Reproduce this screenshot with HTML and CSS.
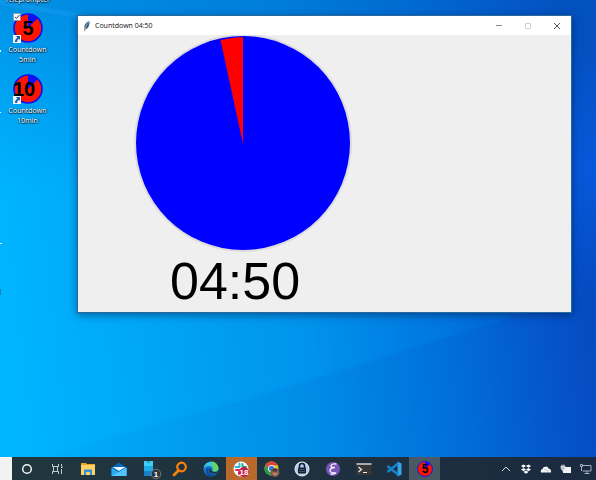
FILE: index.html
```html
<!DOCTYPE html>
<html lang="en">
<head>
<meta charset="utf-8">
<title>Countdown 04:50</title>
<link rel="stylesheet" href="styles.css">
</head>
<body>
<svg class="wallpaper" viewBox="0 0 596 480" preserveAspectRatio="none" aria-hidden="true">
  <defs>
    <linearGradient id="sky" gradientUnits="userSpaceOnUse" x1="0" y1="330" x2="596" y2="260">
      <stop offset="0" stop-color="#00b6ff"/><stop offset=".2" stop-color="#00a8f8"/>
      <stop offset=".5" stop-color="#0092ec"/><stop offset=".75" stop-color="#0070dc"/>
      <stop offset=".92" stop-color="#0652cc"/><stop offset="1" stop-color="#0548be"/>
    </linearGradient>
    <linearGradient id="shade" x1="0" y1="0" x2="0" y2="1">
      <stop offset="0" stop-color="#0060c0" stop-opacity=".4"/><stop offset=".4" stop-color="#0070d0" stop-opacity="0"/>
    </linearGradient>
    <radialGradient id="glow" gradientUnits="userSpaceOnUse" cx="600" cy="170" r="130">
      <stop offset="0" stop-color="#0660e8" stop-opacity=".7"/><stop offset="1" stop-color="#0660e8" stop-opacity="0"/>
    </radialGradient>
    <linearGradient id="beam" x1="0" y1="0" x2="1" y2="0">
      <stop offset="0" stop-color="#0090e0" stop-opacity=".08"/><stop offset=".55" stop-color="#0070d0" stop-opacity=".18"/><stop offset="1" stop-color="#0450b8" stop-opacity=".2"/>
    </linearGradient>
  </defs>
  <rect width="596" height="480" fill="url(#sky)"/>
  <rect width="596" height="480" fill="url(#shade)"/>
  <path d="M0 0 110 18 78 18 0 5Z" fill="#30b0ff" opacity=".2"/>
  <rect width="596" height="480" fill="url(#glow)"/>
  <path d="M0 336 180 312 530 312 0 470Z" fill="#08b8ff" opacity=".06"/>
  <path d="M0 470 300 384 530 312 596 285V480H0Z" fill="url(#beam)"/>
  <path d="M0 50h1v2H0zM0 112h1v1H0zM0 243h2v1H0z" fill="#e8f6ff"/>
  <path d="M0 289h1v6H0z" fill="#2080b0"/>
</svg>

<svg class="defs" aria-hidden="true">
  <symbol id="dial" viewBox="0 0 30 30">
    <circle cx="15" cy="15" r="14" fill="#ff1400" stroke="#1010f0" stroke-width="1.6"/>
    <path d="M15 15V1A14 14 0 0 1 25 5Z" fill="#1010f0"/>
  </symbol>
  <symbol id="shortcut" viewBox="0 0 8 8">
    <path d="M0 0h8v8H0z" fill="#f2f6fa"/>
    <path d="M3 1h4v4L5.800 3.800Q4 5 4 7H2Q1.800 4.500 4.300 2.400Z" fill="#1c5ca8"/>
  </symbol>
</svg>

<main class="desktop">
  <ul class="shortcuts">
    <li class="shortcut cut"><span>Teleprompter</span></li>
    <li class="shortcut">
      <svg class="pic" viewBox="0 0 30 30">
        <use href="#dial" width="30" height="30"/>
        <text x="15" y="22" class="numeral" text-anchor="middle">5</text>
        <path d="M.5.500h7v7h-7z" fill="#f4f8fa" stroke="#889" stroke-width=".5"/>
        <path d="m2 4 1.500 1.500L6.500 2" fill="none" stroke="#444"/>
        <use href="#shortcut" y="22" width="8" height="8"/>
      </svg>
      <span>Countdown<br>5min</span>
    </li>
    <li class="shortcut">
      <svg class="pic" viewBox="0 0 30 30">
        <use href="#dial" width="30" height="30"/>
        <text x="11" y="22" class="numeral" text-anchor="middle">10</text>
        <use href="#shortcut" y="22" width="8" height="8"/>
      </svg>
      <span>Countdown<br>10min</span>
    </li>
  </ul>

  <section class="window">
    <header class="titlebar">
      <svg class="feather" viewBox="0 0 8 12"><path d="M6.500 1Q3 2 1.800 5 1 7 1.600 9L1 12l1.400-2.500Q5 9 5.800 6 7 3 6.500 1Z" fill="#385878"/><path d="M5.800 2Q3 5 2.300 9" fill="none" stroke="#a8c4dc" stroke-width=".8"/></svg>
      <h1>Countdown 04:50</h1>
      <div class="controls">
        <button aria-label="Minimize"><svg viewBox="0 0 8 8"><path d="M1 3.500h6" stroke="#888"/></svg></button>
        <button aria-label="Maximize" disabled><svg viewBox="0 0 8 8"><path d="M1.500 1.500h5v5h-5z" fill="none" stroke="#d4d4d4"/></svg></button>
        <button aria-label="Close"><svg viewBox="0 0 8 8"><path d="m1 1 6 6M7 1 1 7" stroke="#444" stroke-width=".9"/></svg></button>
      </div>
    </header>
    <div class="timer">
      <svg class="pie" viewBox="0 0 218 218">
        <circle cx="109" cy="108" r="108" fill="none" stroke="#dcdce0" stroke-width="2"/>
        <circle cx="109" cy="108" r="107" fill="#00f"/>
        <path d="M109 109V2A107 107 0 0 0 86.500 5Z" fill="red"/>
      </svg>
      <output class="time">04:50</output>
    </div>
  </section>
</main>

<nav class="taskbar">
  <div class="start"></div>
  <div class="apps">
    <button aria-label="Search"><svg viewBox="0 0 18 18"><circle cx="9" cy="9" r="4.300" fill="none" stroke="#f4f4f4" stroke-width="1.500"/></svg></button>
    <button aria-label="Task view"><svg viewBox="0 0 18 18"><path d="M3.500 4v2.500h6V4M3.500 14v-2.500h6V14M4.500 6.500v5M8.500 6.500v5M12.500 4v2M12.500 9v5" fill="none" stroke="#c4cbd0"/><path d="M12 6.500h1.500v1.500H12z" fill="#eee"/></svg></button>
    <button aria-label="Files"><svg viewBox="0 0 18 18"><path d="M2 3h5l1 1h8v2H2z" fill="#e9a51b"/><path d="M2 5h14v10H2z" fill="#ffd267"/><path d="M5 15V9.500h8V15h-2v-3H7v3z" fill="#368ed6"/></svg></button>
    <button aria-label="Mail"><svg viewBox="0 0 18 18"><path d="m1.500 7.500 7.500-5 7.500 5V15h-15z" fill="#0868b8"/><path d="M2.500 7h13L9 11z" fill="#e8f6ff"/><path d="m1.500 7.500 7.500 5 7.500-5V16h-15z" fill="#28aaf0"/><path d="M1.500 16 16.500 7.500V16z" fill="#54c4ff"/></svg></button>
    <button aria-label="Your Phone"><svg viewBox="0 0 18 18"><path d="M3 1h9v15H3z" fill="#1680c8"/><path d="M3 1h9v5H3z" fill="#42ccf5"/><path d="M3 6h9v5H3z" fill="#20aae8"/><path d="M6 2h3" stroke="#087cae"/><circle cx="15" cy="14" r="4.800" fill="#2e3438" stroke="#8a9298" stroke-width=".7"/><text x="15" y="17" class="badge" text-anchor="middle">1</text></svg></button>
    <button aria-label="Find"><svg viewBox="0 0 18 18"><circle cx="10.500" cy="7" r="4.300" fill="none" stroke="#ff8008" stroke-width="2.200"/><path d="m7.500 10.500-4.500 4.500" stroke="#ff8008" stroke-width="2.800" stroke-linecap="round"/></svg></button>
    <button aria-label="Edge"><svg viewBox="0 0 18 18"><circle cx="9" cy="9" r="7.500" fill="#1678d0"/><path d="M1.700 8C3 0 14.500-.5 16.300 7.500c.8 4-4 5-6 3.500 2-3-1-5.500-4-5Q3.500 6 1.700 8Z" fill="#38c6dc"/><path d="M10 1.500q5.800.8 6.500 7-.5 3-4 3-2 0-2.200-.8 1.800-2.700-.3-4.700Z" fill="#5fd76b"/><path d="M7 8q-2 4 2 6 3 1.500 6-.5Q12 17.500 7 16.200 3 14 4 10 5 7 7 8Z" fill="#0b4d9a"/><path d="M9 8q-1 2 1 3 3 2 6 0l-1 2q-5 2-7.500-1Q6 9.500 9 8Z" fill="#20343f"/></svg></button>
    <button class="alert" aria-label="Slack"><svg viewBox="0 0 18 18"><circle cx="9" cy="9" r="7.500" fill="#fff"/><g stroke-width="2" stroke-linecap="round"><path d="M7.500 3.500V7M3.500 7H6" stroke="#35b6d8"/><path d="M10.500 4v3M12 7h2" stroke="#25a779"/><path d="M4 10h3M7 12v2" stroke="#dc2858"/></g><circle cx="12" cy="12" r="5" fill="#c81848"/><text x="12" y="15" class="badge" text-anchor="middle">18</text></svg></button>
    <button aria-label="Chrome"><svg viewBox="0 0 18 18"><circle cx="8.500" cy="8.500" r="7" fill="#f0bd25"/><path d="M2.400 5A7 7 0 0 1 14.600 5L8.500 6 6 10Z" fill="#dc4438"/><path d="m2.400 5 4 6 2 4.500A7 7 0 0 1 2.400 5Z" fill="#259b50"/><circle cx="8.500" cy="8.500" r="3.500" fill="#fff"/><circle cx="8.500" cy="8.500" r="2.700" fill="#347ce0"/><circle cx="12" cy="12.500" r="4.500" fill="#705850"/><ellipse cx="12" cy="12" rx="2.700" ry="3.600" fill="#c87c68"/><path d="M9.300 10q2.500-3 5 0v1.500h-5z" fill="#443a38"/><path d="M10 12h4" stroke="#303030" stroke-width=".7"/></svg></button>
    <button aria-label="Password manager"><svg viewBox="0 0 18 18"><circle cx="9" cy="9" r="7" fill="#b5cbf4" stroke="#f0f2f6"/><path d="M6.500 8V6q0-2.500 2.500-2.500T11.500 6v2" fill="none" stroke="#15202d" stroke-width="1.500"/><rect x="5" y="7.500" width="8" height="6" rx=".8" fill="#15202d"/><path d="M6 9.500h6M6 11.500h6" stroke="#66778e" stroke-width=".6"/></svg></button>
    <button aria-label="Emacs"><svg viewBox="0 0 18 18"><circle cx="9" cy="9" r="7" fill="#7857b5"/><path d="M12 4Q7 3.500 7 6q0 1.500 4 1.500-5 .3-5 3 0 2.500 6 2.500-3 1.500-5 1" fill="none" stroke="#f4effc" stroke-width="1.300" stroke-linecap="round"/></svg></button>
    <button aria-label="Terminal"><svg viewBox="0 0 18 18"><path d="M1.500 3h15v12h-15z" fill="#373737"/><path d="M1.500 3h15v2h-15z" fill="#aaa"/><path d="m3.500 7 3 2.500-3 2.500M8 12.500h4" fill="none" stroke="#eee" stroke-width="1.200"/></svg></button>
    <button aria-label="Code"><svg viewBox="0 0 18 18"><path d="m12.500 1.500 4 2v11l-4 2z" fill="#32a8ed"/><path d="m2.500 6 10.500 8.500M2.500 12 13 3.500" stroke="#1684cd" stroke-width="2.500"/></svg></button>
    <button class="active" aria-label="Countdown"><svg viewBox="0 0 18 18"><use href="#dial" x="1" y="1" width="16" height="16"/><text x="9" y="13" class="mini" text-anchor="middle">5</text></svg></button>
  </div>
  <div class="tray">
    <button aria-label="Hidden icons"><svg viewBox="0 0 12 12"><path d="m2 8 4-4 4 4" fill="none" stroke="#d4dae0"/></svg></button>
    <button aria-label="Dropbox"><svg viewBox="0 0 12 12"><path d="m3.500 1.500 2.500 1.500-2.500 1.700L1 3zM8.500 1.500 11 3 8.500 4.700 6 3zM3.500 5 6 6.600 3.500 8.200 1 6.600zM8.500 5 11 6.600 8.500 8.200 6 6.600zM6 7.500l2.500 1.600L6 10.800 3.500 9.100z" fill="#fff"/></svg></button>
    <button aria-label="Cloud storage"><svg viewBox="0 0 12 12"><path d="M1 9.500Q0 7 2.500 6 3 3.500 5.500 3.700 7.500 3 8.500 5.500 11.500 6 11 9.500Z" fill="#f1f3f5"/><path d="m4 6 4.500 2.500" stroke="#aab2ba" stroke-width=".7"/></svg></button>
    <button aria-label="Battery"><svg viewBox="0 0 12 12"><path d="M3 4h8v6H3z" fill="#f2f2f2"/><path d="M1 3h4v2L4 7H2L1 5zM2 1.500V4M4 1.500V4M3 7v2" fill="#bbc2c8" stroke="#e4e8ec" stroke-width=".7"/></svg></button>
    <button aria-label="Network"><svg viewBox="0 0 12 12"><path d="M3 2.500h8v5.500H2.500M7 8v2.500M4.500 10.500h5M1.500 4v4M.5 1.500h2v2h-2z" fill="none" stroke="#b2bdc8" stroke-width=".9"/></svg></button>
  </div>
</nav>
</body>
</html>
```

FILE: styles.css
```css
* { box-sizing: border-box; }

body {
  margin: 0;
  min-height: 100vh;
  display: flex;
  flex-direction: column;
  overflow: hidden;
  font-family: "Open Sans", "Noto Sans", sans-serif;
  font-size: 7px;
  background: #0090ea;
}

svg { display: block; flex: none; }

button {
  display: flex;
  align-items: center;
  justify-content: center;
  padding: 0;
  border: 0;
  background: none;
}

.wallpaper {
  position: absolute;
  inset: 0;
  z-index: -1;
  width: 100%;
  height: 100%;
}

.defs { position: absolute; width: 0; height: 0; }

.desktop {
  flex: 1;
  display: flex;
  align-items: flex-start;
}

.shortcuts {
  flex: none;
  width: 55px;
  margin: 0;
  padding: 0;
  list-style: none;
}

.shortcut {
  display: flex;
  flex-direction: column;
  align-items: center;
  gap: 2px;
  height: 61px;
  color: #fff;
  line-height: 10px;
  text-align: center;
  text-shadow: 0 1px 1px #000, 1px 0 1px #024;
}

.cut {
  height: 13px;
  justify-content: flex-end;
  padding-bottom: 8px;
}

.pic { width: 30px; height: 30px; overflow: visible; }

.numeral {
  font: bold 20px "Liberation Sans", sans-serif;
  text-shadow: none;
}

.window {
  flex: 1;
  margin: 15px 24px 0 22px;
  border: 1px solid #28689c;
  background: #efefef;
  box-shadow: 0 2px 8px rgba(0, 20, 60, .5);
}

.titlebar {
  display: flex;
  align-items: center;
  gap: 4px;
  height: 19px;
  padding-left: 5px;
  background: #fff;
}

.feather { width: 8px; height: 12px; }

h1 {
  flex: 1;
  margin: 0;
  font-size: 7px;
  font-weight: 400;
  color: #111;
}

.controls { display: flex; }
.controls button { width: 29px; height: 19px; }
.controls svg { width: 8px; height: 8px; }

.timer {
  display: flex;
  flex-direction: column;
  align-items: flex-start;
  padding: 0 0 2px 56px;
}

.pie { width: 218px; height: 218px; }

.time {
  padding-left: 36px;
  font: 52px/57px "Liberation Sans", sans-serif;
  color: #000;
}

.taskbar {
  display: flex;
  height: 23px;
  background: linear-gradient(90deg, #20373f, #1e303f 60%, #1b2a40);
}

.start { width: 12px; background: #f2f2f2; }

.apps {
  flex: 1;
  max-width: 428px;
  display: grid;
  grid-template-columns: repeat(14, 1fr);
}

.apps svg { width: 18px; height: 18px; overflow: visible; }
.alert { background: #b9692b; }
.active { background: #4a5966; }

.badge {
  font: bold 8px "Liberation Sans", sans-serif;
  fill: #fff;
}

.mini { font: bold 12px "Liberation Sans", sans-serif; }

.tray {
  display: grid;
  grid-template-columns: repeat(5, 20px);
  margin-left: auto;
}

.tray svg { width: 12px; height: 12px; }
```
